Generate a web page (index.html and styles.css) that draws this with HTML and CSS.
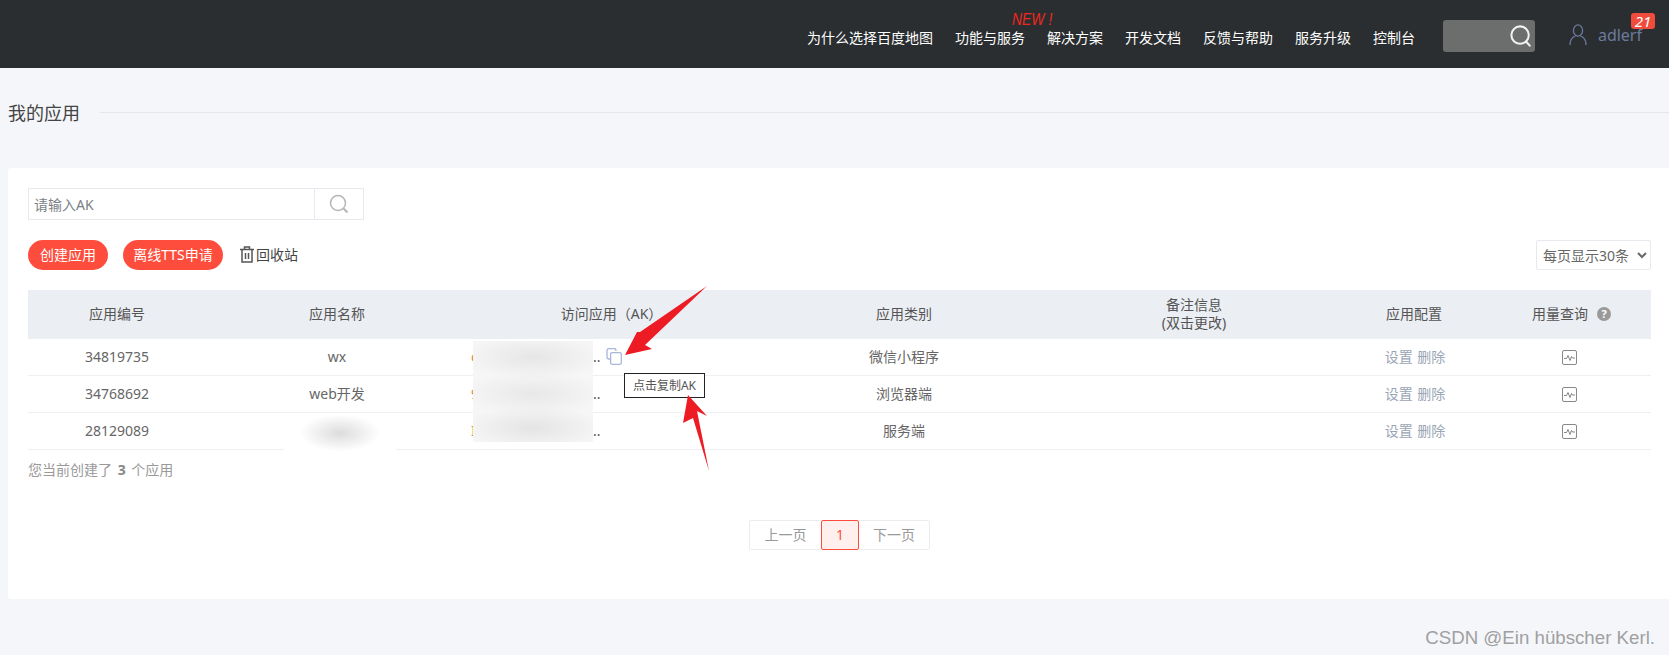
FILE: index.html
```html
<!DOCTYPE html>
<html lang="zh-CN">
<head>
    <meta charset="UTF-8">
    <title>我的应用</title>
    <link rel="stylesheet" href="styles.css">
</head>
<body>
    <header class="topbar">
        <nav class="nav">
            <a class="nav-item">为什么选择百度地图</a>
            <a class="nav-item">功能与服务<span class="nav-new">NEW !</span></a>
            <a class="nav-item">解决方案</a>
            <a class="nav-item">开发文档</a>
            <a class="nav-item">反馈与帮助</a>
            <a class="nav-item">服务升级</a>
            <a class="nav-item">控制台</a>
        </nav>
        <div class="top-search">
            <svg width="22" height="22" viewBox="0 0 24 24" fill="none" stroke="#f2f2f2" stroke-width="2.200">
                <circle cx="11" cy="11" r="9.500"/>
                <path d="M17.500 18l4 4.500" stroke-linecap="round"/>
            </svg>
        </div>
        <div class="user">
            <svg width="18" height="22" viewBox="0 0 18 22" fill="none" stroke="#6d7a9c" stroke-width="1.300">
                <ellipse cx="9" cy="6.500" rx="4.600" ry="5.600"/>
                <path d="M1 21c0-5 2.500-8 5.500-9M17 21c0-5-2.500-8-5.500-9"/>
            </svg>
            <span class="user-name">adlerf</span>
            <span class="user-badge">21</span>
        </div>
    </header>

    <div class="title-row">
        <h1 class="title">我的应用</h1>
        <div class="title-line"></div>
    </div>

    <main class="card">
        <div class="ak-search">
            <input class="ak-input" type="text" placeholder="请输入AK">
            <button class="ak-btn">
                <svg width="20" height="20" viewBox="0 0 20 20" fill="none" stroke="#b5b5b5" stroke-width="1.500">
                    <circle cx="9" cy="9" r="7.500"/>
                    <path d="M14.500 14.500l4 4" stroke-width="2"/>
                </svg>
            </button>
        </div>

        <div class="toolbar">
            <button class="pill">创建应用</button>
            <button class="pill pill-tts">离线TTS申请</button>
            <a class="recycle">
                <svg width="14" height="17" viewBox="0 0 14 17" fill="none" stroke="#555" stroke-width="1.500">
                    <path d="M0 3.500h14M4.500 3V1h5v2M2 4v12h10V4M5.500 7v6M8.500 7v6"/>
                </svg>
                回收站
            </a>
            <select class="page-size">
                <option>每页显示30条</option>
            </select>
        </div>

        <div class="table-wrap">
            <table class="apps">
                <colgroup>
                    <col class="c1"><col class="c2"><col class="c3"><col class="c4"><col class="c5"><col class="c6"><col class="c7">
                </colgroup>
                <thead>
                    <tr>
                        <th>应用编号</th>
                        <th>应用名称</th>
                        <th class="th-ak">访问应用（AK）</th>
                        <th>应用类别</th>
                        <th>备注信息<br>(双击更改)</th>
                        <th>应用配置</th>
                        <th class="th-usage">用量查询<span class="help">?</span></th>
                    </tr>
                </thead>
                <tbody>
                    <tr>
                        <td>34819735</td>
                        <td>wx</td>
                        <td class="ak-cell">
                            <span class="ak-key">e</span><span class="ak-dots">..</span>
                            <svg class="copy" width="16" height="17" viewBox="0 0 16 17" fill="#fff" stroke="#a9b6dc" stroke-width="1.300">
                                <path d="M10 3V2.500a2 2 0 0 0-2-2H3a2 2 0 0 0-2 2V9a2 2 0 0 0 2 2h1"/>
                                <rect x="4.600" y="4.600" width="10.700" height="11.700" rx="1.500"/>
                            </svg>
                        </td>
                        <td>微信小程序</td>
                        <td></td>
                        <td class="ops"><a>设置</a> <a>删除</a></td>
                        <td class="usage"><svg class="chart" width="15" height="15" viewBox="0 0 15 15" fill="none" stroke="#888"><rect x="0.500" y="0.500" width="14" height="14" rx="1.500"/><path d="M2 8.500h2.500l1.500-3 2 5 1.500-4 1 1.500h2.500" stroke="#666" stroke-width="0.800"/></svg></td>
                    </tr>
                    <tr>
                        <td>34768692</td>
                        <td>web开发</td>
                        <td class="ak-cell">
                            <span class="ak-key">9</span><span class="ak-dots">..</span>
                        </td>
                        <td>浏览器端</td>
                        <td></td>
                        <td class="ops"><a>设置</a> <a>删除</a></td>
                        <td class="usage"><svg class="chart" width="15" height="15" viewBox="0 0 15 15" fill="none" stroke="#888"><rect x="0.500" y="0.500" width="14" height="14" rx="1.500"/><path d="M2 8.500h2.500l1.500-3 2 5 1.500-4 1 1.500h2.500" stroke="#666" stroke-width="0.800"/></svg></td>
                    </tr>
                    <tr>
                        <td>28129089</td>
                        <td></td>
                        <td class="ak-cell">
                            <span class="ak-key">I</span><span class="ak-dots">..</span>
                        </td>
                        <td>服务端</td>
                        <td></td>
                        <td class="ops"><a>设置</a> <a>删除</a></td>
                        <td class="usage"><svg class="chart" width="15" height="15" viewBox="0 0 15 15" fill="none" stroke="#888"><rect x="0.500" y="0.500" width="14" height="14" rx="1.500"/><path d="M2 8.500h2.500l1.500-3 2 5 1.500-4 1 1.500h2.500" stroke="#666" stroke-width="0.800"/></svg></td>
                    </tr>
                </tbody>
            </table>
            <div class="blur-ak"></div>
            <div class="blur-name"></div>
            <div class="tooltip">点击复制AK</div>
        </div>

        <p class="count">您当前创建了 <b>3</b> 个应用</p>

        <div class="pager">
            <a class="page-link">上一页</a>
            <a class="page-link page-on">1</a>
            <a class="page-link">下一页</a>
        </div>
    </main>

    <div class="watermark">CSDN @Ein hübscher Kerl.</div>

    <!-- 截图上的红色箭头 -->
    <svg class="marks" width="1669" height="655" viewBox="0 0 1669 655">
        <polygon points="707,286 640,332 637,332 625,355 652,349 645,345" fill="#ed1c24"/>
        <polygon points="688,395 683,423 693,418 709,471 697,411 707,416" fill="#ed1c24"/>
    </svg>
</body>
</html>
```

FILE: styles.css
```css
* {
    box-sizing: border-box;
}
body {
    margin: 0;
    height: 655px;
    overflow: hidden;
    position: relative;
    background: #f5f6fa;
    color: #555;
    font-family: "Noto Sans", "Noto Sans CJK SC", sans-serif;
    font-size: 14px;
}

/* 顶部导航 */
.topbar {
    height: 68px;
    background: #2a2e30;
    display: flex;
    justify-content: flex-end;
    align-items: center;
    padding-right: 27px;
}
.nav {
    display: flex;
    gap: 22px;
    padding-top: 7px;
}
.nav-item {
    position: relative;
    color: #fff;
    font-size: 14px;
    line-height: 20px;
}
.nav-new {
    position: absolute;
    left: 57px;
    top: -16px;
    color: #f0281e;
    font-family: "Liberation Sans", sans-serif;
    font-size: 17px;
    font-style: italic;
    line-height: 16px;
    white-space: nowrap;
    transform: scaleX(0.82);
    transform-origin: left center;
}
.top-search {
    width: 92px;
    height: 32px;
    margin: 4px 0 0 28px;
    background: #6c6e6d;
    border-radius: 3px;
    display: flex;
    justify-content: flex-end;
    align-items: center;
    padding-right: 3px;
}
.user {
    position: relative;
    display: flex;
    align-items: center;
    gap: 11px;
    margin: 2px 0 0 34px;
}
.user-name {
    color: #6d7a9c;
    font-size: 16px;
    line-height: 12px;
}
.user-badge {
    position: absolute;
    right: -13px;
    top: -11px;
    width: 24px;
    height: 16px;
    background: #f04b3c;
    border-radius: 3px;
    color: #fff;
    font-size: 15px;
    font-style: italic;
    line-height: 16px;
    text-align: center;
}

/* 标题 */
.title-row {
    display: flex;
    align-items: center;
    height: 24px;
    margin: 32px 0 44px 8px;
}
.title {
    margin: 0;
    color: #444;
    font-size: 18px;
    font-weight: normal;
    white-space: nowrap;
}
.title-line {
    flex: 1;
    height: 1px;
    margin-left: 20px;
    background: #e4e6ea;
}

/* 白色卡片 */
.card {
    height: 431px;
    margin-left: 8px;
    padding: 20px 18px 0 20px;
    background: #fff;
    border-radius: 3px 0 0 3px;
}
.ak-search {
    display: flex;
    width: 336px;
    height: 32px;
    border: 1px solid #e6e9ee;
}
.ak-input {
    flex: 1;
    min-width: 0;
    border: 0;
    outline: 0;
    padding: 0 5px;
    font: inherit;
    font-size: 14px;
    color: #555;
}
.ak-input::placeholder {
    color: #7b7f86;
}
.ak-btn {
    width: 49px;
    border: 0;
    border-left: 1px solid #e6e9ee;
    background: #fff;
    padding: 2px 0 0;
}
.toolbar {
    display: flex;
    align-items: center;
    height: 30px;
    margin-top: 20px;
}
.pill {
    height: 30px;
    padding: 0 12px 2px;
    margin-right: 15px;
    border: 0;
    border-radius: 15px;
    background: #fe4d3c;
    color: #fff;
    font: inherit;
}
.pill-tts {
    width: 100px;
    padding: 0 0 2px;
}
.recycle {
    display: flex;
    align-items: center;
    gap: 2px;
    margin: -2px 0 0 2px;
    color: #444;
}
.page-size {
    width: 115px;
    height: 30px;
    margin-left: auto;
    padding: 0 2px;
    border: 1px solid #e6e9ee;
    border-radius: 2px;
    background: #fff;
    color: #666;
    font: inherit;
}

/* 应用表格 */
.table-wrap {
    position: relative;
    margin-top: 20px;
}
.apps {
    width: 1623px;
    table-layout: fixed;
    border-collapse: separate;
    border-spacing: 0;
}
.c1 { width: 178px; }
.c2 { width: 262px; }
.c3 { width: 280px; }
.c4 { width: 312px; }
.c5 { width: 268px; }
.c6 { width: 172px; }
.c7 { width: 151px; }
.apps th {
    height: 49px;
    padding: 0 0 2px;
    background: #ebeef3;
    color: #555;
    font-weight: normal;
    font-size: 14px;
    line-height: 18px;
}
.apps .th-ak {
    padding-left: 7px;
}
.apps .th-usage {
    padding-right: 8px;
}
.apps td {
    height: 37px;
    padding: 0 0 2px;
    border-bottom: 1px solid #eef0f3;
    text-align: center;
    color: #666;
}
.help {
    display: inline-block;
    width: 14px;
    height: 14px;
    margin-left: 9px;
    border-radius: 50%;
    background: #9a9a9a;
    color: #fff;
    font-size: 11px;
    font-weight: bold;
    line-height: 14px;
    vertical-align: 1px;
}
.apps .ak-cell {
    text-align: left;
    padding-left: 3px;
    white-space: nowrap;
}
.ak-key {
    display: inline-block;
    width: 122px;
    color: #d98a45;
}
.ak-dots {
    color: #555;
}
.copy {
    margin-left: 2px;
    vertical-align: -3px;
}
.apps .ops {
    padding-left: 2px;
    word-spacing: 1px;
}
.apps .ops a {
    color: #9aa5b5;
}
.apps .usage {
    padding-right: 13px;
}
.chart {
    vertical-align: middle;
}
.blur-ak {
    position: absolute;
    left: 445px;
    top: 51px;
    width: 120px;
    height: 101px;
    background:
        radial-gradient(ellipse 60% 22% at 50% 16%, #e6e6e6, transparent),
        radial-gradient(ellipse 60% 22% at 50% 52%, #e8e8e8, transparent),
        radial-gradient(ellipse 60% 22% at 50% 86%, #e4e4e4, transparent),
        #f6f6f6;
}
.blur-name {
    position: absolute;
    left: 256px;
    top: 125px;
    width: 112px;
    height: 36px;
    background: radial-gradient(ellipse 36% 52% at 50% 50%, #dcdcdc, #fff);
}
.tooltip {
    position: absolute;
    left: 596px;
    top: 83px;
    width: 81px;
    height: 25px;
    border: 1px solid #222;
    background: #fff;
    color: #555;
    font-size: 12px;
    line-height: 23px;
    text-align: center;
}

.count {
    margin: 10px 0 0;
    color: #999;
    font-size: 14px;
    line-height: 20px;
}
.count b {
    margin: 0 2px;
    color: #888;
}
.pager {
    display: flex;
    justify-content: center;
    margin-top: 40px;
}
.page-link {
    height: 30px;
    width: 71px;
    border: 1px solid #ececec;
    color: #999;
    font-size: 14px;
    line-height: 28px;
    text-align: center;
}
.page-link:first-child {
    width: 72px;
    border-radius: 2px 0 0 2px;
    border-right: 0;
}
.page-link:last-child {
    border-radius: 0 2px 2px 0;
    border-left: 0;
}
.page-on {
    width: 38px;
    border-color: #fe4d3c;
    border-radius: 2px;
    background: #fff0ee;
    color: #fe4d3c;
}

.watermark {
    position: absolute;
    right: 14px;
    top: 627px;
    color: #a0a0a0;
    font-family: "Liberation Sans", sans-serif;
    font-size: 18.700px;
    line-height: 22px;
    white-space: nowrap;
}
.marks {
    position: absolute;
    left: 0;
    top: 0;
    pointer-events: none;
}
```
